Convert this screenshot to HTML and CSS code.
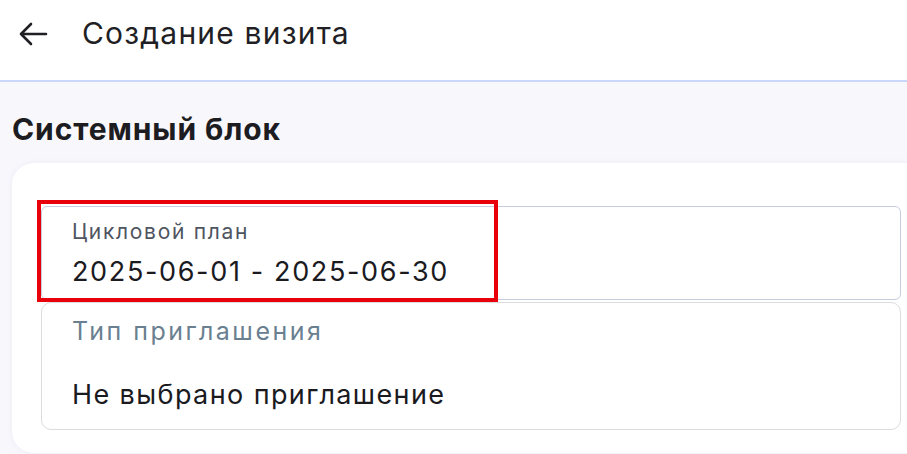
FILE: index.html
```html
<!DOCTYPE html>
<html lang="ru">
<head>
<meta charset="utf-8">
<title>Создание визита</title>
<link rel="stylesheet" href="styles.css">
</head>
<body>
<header class="topbar">
  <svg class="back" width="30" height="24" viewBox="0 0 30 24" aria-hidden="true">
    <path d="M28 12H3M13 2L3 12l10 10" fill="none" stroke="#1f1f24" stroke-width="2.6" stroke-linecap="round" stroke-linejoin="round"/>
  </svg>
  <h1 class="title">Создание визита</h1>
</header>
<main class="content">
  <h2 class="section-title">Системный блок</h2>
  <section class="card">
    <div class="field field-plan">
      <div class="field-label">Цикловой план</div>
      <div class="field-value">2025-06-01 - 2025-06-30</div>
      <div class="highlight"></div>
    </div>
    <div class="field field-select">
      <div class="select-label">Тип приглашения</div>
      <div class="select-value">Не выбрано приглашение</div>
    </div>
  </section>
</main>
</body>
</html>
```
FILE: styles.css
```css
* { box-sizing: border-box; }
html, body { margin: 0; padding: 0; }
body {
  width: 907px;
  height: 454px;
  overflow: hidden;
  font-family: "Inter", "Noto Sans", sans-serif;
  color: #1e1e23;
  background: #f8f7fc;
}
.topbar {
  height: 82px;
  background: #ffffff;
  border-bottom: 2px solid #c9d7fb;
  display: flex;
  align-items: center;
  padding-left: 18px;
  gap: 34px;
  padding-bottom: 13px;
}
.back { display: block; flex: none; }
.title {
  margin: 0;
  font-size: 30px;
  line-height: 35px;
  font-weight: 400;
  color: #1f1f25;
  letter-spacing: 1.2px;
}
.content {
  padding: 0 0 0 12px;
}
.section-title {
  margin: 0;
  padding-top: 29px;
  height: 81px;
  font-size: 30px;
  line-height: 36px;
  font-weight: 700;
  color: #1c1c21;
  letter-spacing: 0.9px;
}
.card {
  background: #ffffff;
  border-radius: 22px;
  margin-right: -40px;
  height: 290px;
  padding: 43px 46px 0 29px;
  box-shadow: 0 0 6px rgba(120, 120, 160, 0.08);
}
.field {
  position: relative;
  width: 860px;
}
.field-plan {
  height: 94px;
  border: 1.5px solid #c7cde0;
  border-radius: 6px;
  padding: 13px 0 0 30px;
}
.field-label {
  font-size: 21px;
  color: #4f5461;
  letter-spacing: 1.7px;
  line-height: 24px;
}
.field-value {
  margin-top: 13px;
  font-size: 27px;
  color: #1a1a1f;
  letter-spacing: 1.65px;
  line-height: 30px;
}
.highlight {
  position: absolute;
  left: -5px;
  top: -7px;
  width: 461px;
  height: 102px;
  border: 4px solid #e8000b;
}
.field-select {
  margin-top: 2px;
  height: 128px;
  border: 1.5px solid #dcdcdf;
  border-radius: 10px;
  padding: 13px 0 0 30px;
}
.select-label {
  font-size: 25px;
  color: #6a8090;
  letter-spacing: 2.5px;
  line-height: 30px;
}
.select-value {
  margin-top: 34px;
  font-size: 27px;
  color: #1a1a1f;
  letter-spacing: 1.4px;
  line-height: 30px;
}
```
